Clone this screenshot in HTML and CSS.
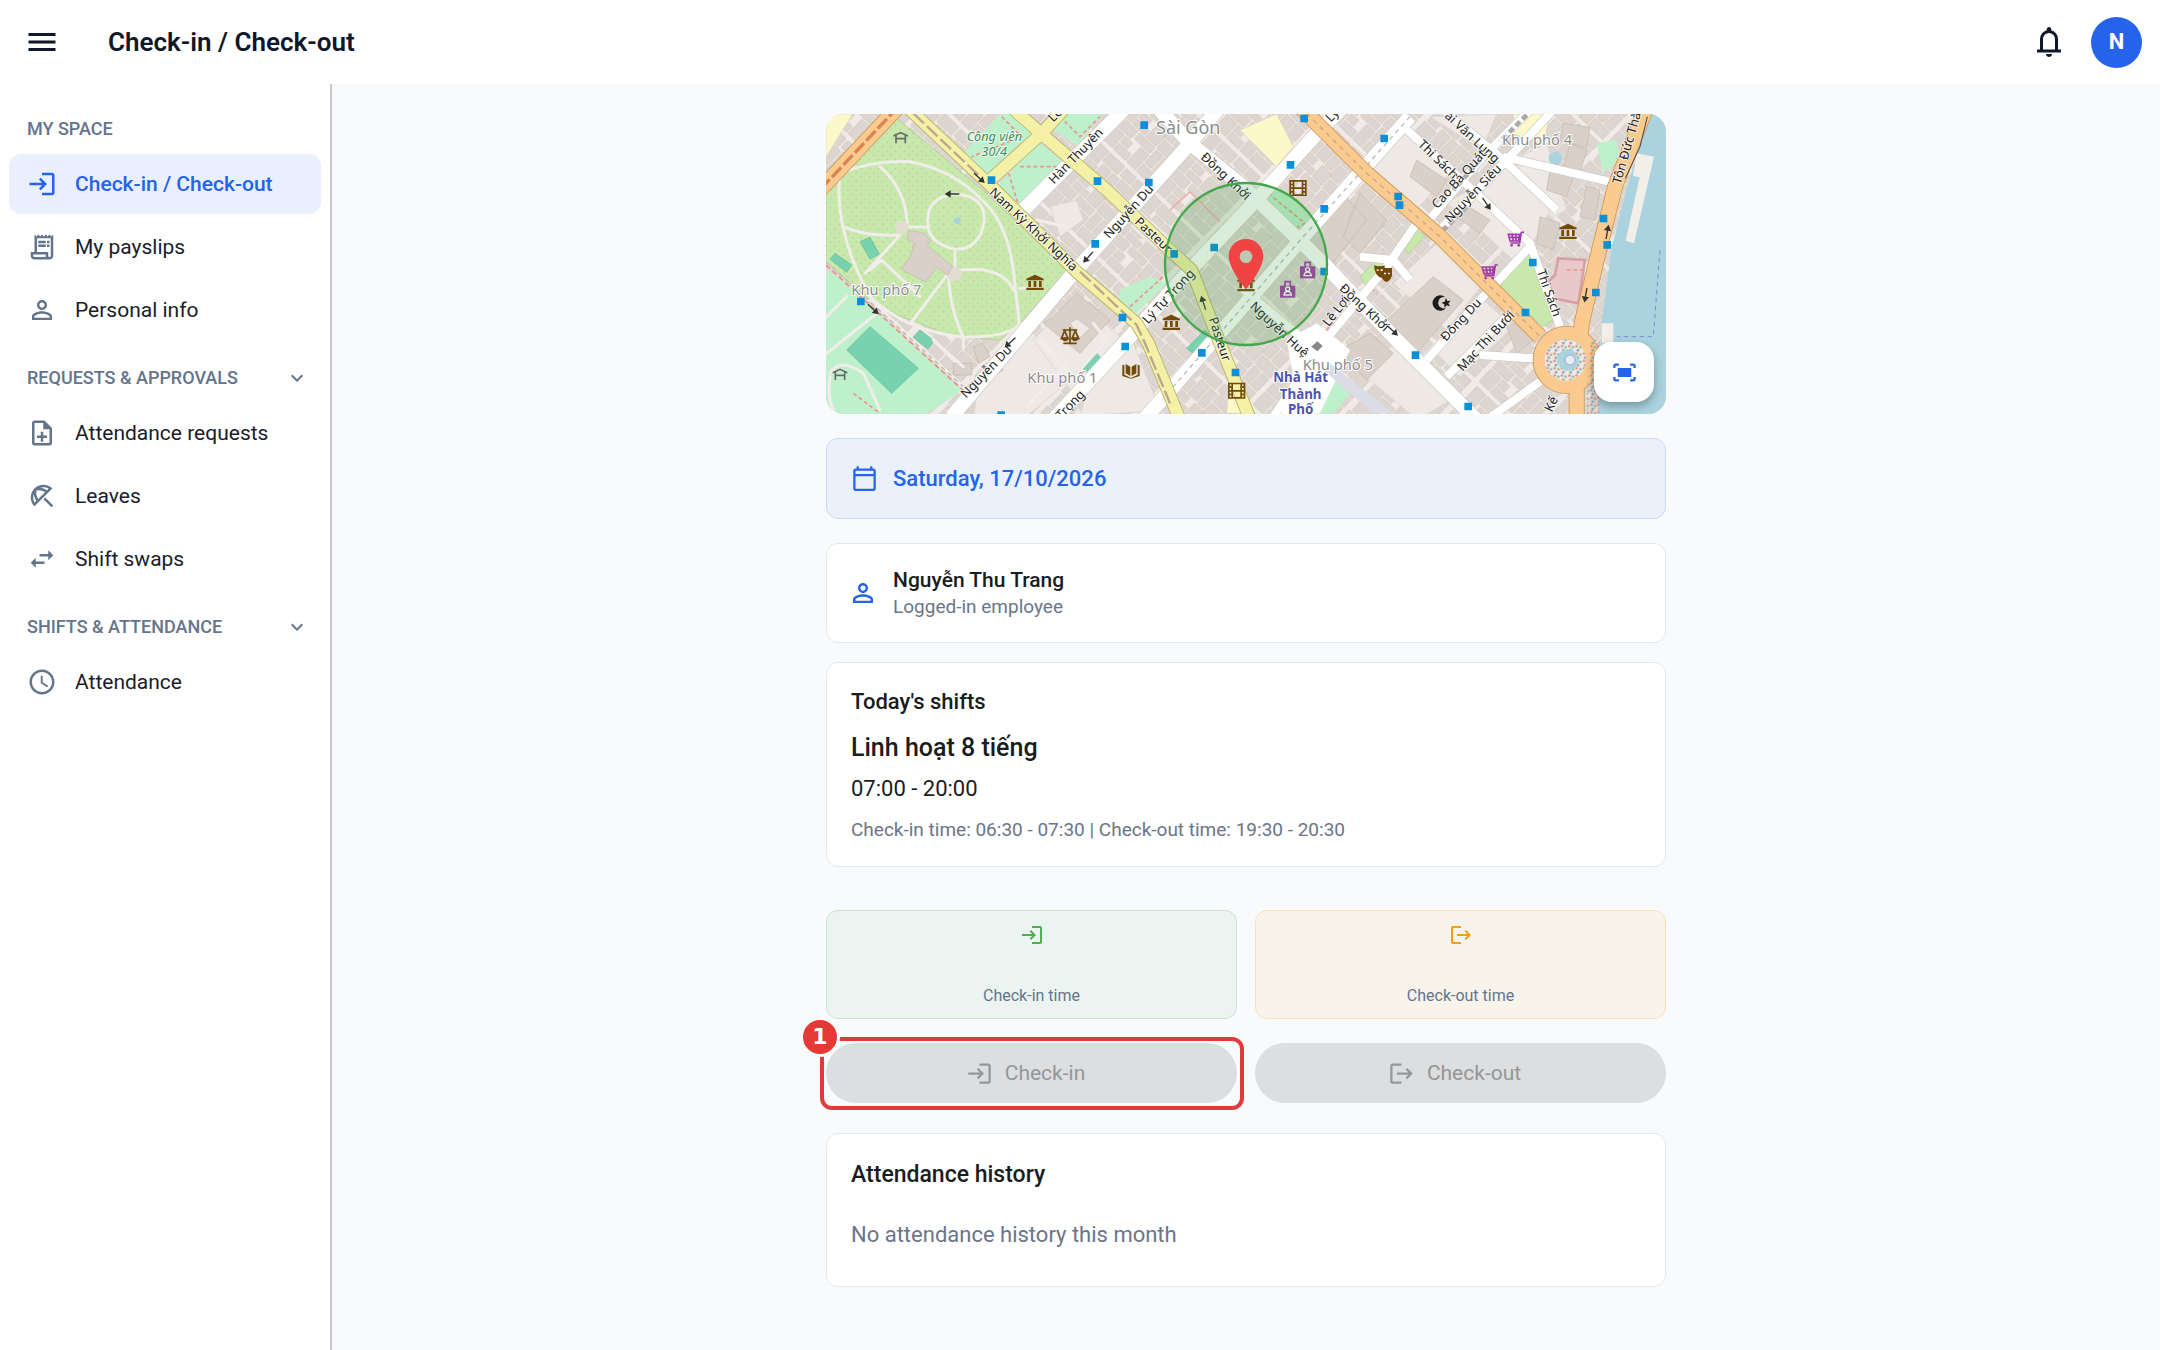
FILE: index.html
```html
<!DOCTYPE html>
<html lang="en">
<head>
<meta charset="utf-8">
<meta name="viewport" content="width=device-width, initial-scale=1">
<title>Check-in / Check-out</title>
<link rel="stylesheet" href="styles.css">
</head>
<body>
<svg class="defs" aria-hidden="true">
  <symbol id="i-login" viewBox="0 0 24 24"><path d="M11 7 9.6 8.4l2.6 2.6H2v2h10.2l-2.6 2.6L11 17l5-5-5-5zm9 12h-8v2h8c1.1 0 2-.9 2-2V5c0-1.1-.9-2-2-2h-8v2h8v14z"/></symbol>
  <symbol id="i-logout" viewBox="0 0 24 24"><path d="M17 7l-1.41 1.41L18.17 11H8v2h10.17l-2.58 2.58L17 17l5-5zM4 5h8V3H4c-1.1 0-2 .9-2 2v14c0 1.1.9 2 2 2h8v-2H4V5z"/></symbol>
  <symbol id="i-person" viewBox="0 0 24 24"><path d="M12 5.9c1.16 0 2.1.94 2.1 2.1s-.94 2.1-2.1 2.1S9.9 9.16 9.9 8s.94-2.1 2.1-2.1m0 9c2.97 0 6.1 1.46 6.1 2.1v1.1H5.9V17c0-.64 3.13-2.1 6.1-2.1M12 4C9.79 4 8 5.79 8 8s1.79 4 4 4 4-1.79 4-4-1.79-4-4-4zm0 9c-2.67 0-8 1.34-8 4v3h16v-3c0-2.66-5.33-4-8-4z"/></symbol>
  <symbol id="i-chevron" viewBox="0 0 24 24"><path d="M16.59 8.59 12 13.17 7.41 8.59 6 10l6 6 6-6z"/></symbol>
</svg>

<header class="topbar">
  <button class="icon-btn" type="button" aria-label="Menu">
    <svg class="icon-lg" viewBox="0 0 24 24"><path d="M3 18h18v-2H3v2zm0-5h18v-2H3v2zm0-7v2h18V6H3z"/></svg>
  </button>
  <h1 class="topbar-title">Check-in / Check-out</h1>
  <button class="icon-btn" type="button" aria-label="Notifications">
    <svg class="icon-lg" viewBox="0 -960 960 960"><path d="M160-200v-80h80v-280q0-83 50-147.5T420-792v-28q0-25 17.5-42.5T480-880t42.5 17.5T540-820v28q80 20 130 84.5T720-560v280h80v80H160Zm320 120q-33 0-56.500-23.500T400-160h160q0 33-23.500 56.500T480-80ZM320-280h320v-280q0-66-47-113t-113-47q-66 0-113 47t-47 113v280Z"/></svg>
  </button>
  <button class="avatar" type="button">N</button>
</header>

<div class="layout">
  <nav class="sidebar">
    <h2 class="nav-heading">MY SPACE</h2>
    <ul class="nav-list">
      <li><a class="nav-item active" href="#checkin" aria-current="page"><svg class="icon-md"><use href="#i-login"/></svg>Check-in / Check-out</a></li>
      <li><a class="nav-item" href="#payslips"><svg class="icon-md" viewBox="0 0 24 24"><path d="M19.500 3.500 18 2l-1.500 1.500L15 2l-1.500 1.500L12 2l-1.500 1.500L9 2 7.500 3.500 6 2v14H3v3c0 1.660 1.340 3 3 3h12c1.660 0 3-1.340 3-3V2l-1.500 1.500zM15 20H6c-.55 0-1-.45-1-1v-1h10v2zm4-1c0 .55-.45 1-1 1s-1-.45-1-1v-3H8V5h11v14z"/><path d="M9 7h6v2H9zM16 7h2v2h-2zM9 10h6v2H9zM16 10h2v2h-2z"/></svg>My payslips</a></li>
      <li><a class="nav-item" href="#personal"><svg class="icon-md"><use href="#i-person"/></svg>Personal info</a></li>
    </ul>
    <button class="nav-heading" type="button" aria-expanded="true">REQUESTS &amp; APPROVALS<svg class="icon-xs"><use href="#i-chevron"/></svg></button>
    <ul class="nav-list">
      <li><a class="nav-item" href="#requests"><svg class="icon-md" viewBox="0 0 24 24"><path d="M13 11h-2v3H8v2h3v3h2v-3h3v-2h-3v-3zm1-9H6c-1.100 0-2 .9-2 2v16c0 1.100.89 2 1.990 2H18c1.100 0 2-.9 2-2V8l-6-6zm4 18H6V4h7v5h5v11z"/></svg>Attendance requests</a></li>
      <li><a class="nav-item" href="#leaves"><svg class="icon-md" viewBox="0 0 24 24"><path d="M21 19.570l-1.427 1.428-6.442-6.442 1.430-1.428zM13.120 3c-2.580 0-5.160.98-7.140 2.950l-.01.01c-3.950 3.950-3.950 10.360 0 14.310l14.300-14.310C18.300 3.990 15.710 3 13.120 3zM6.140 17.270C5.400 16.030 5 14.610 5 13.120c0-.93.16-1.820.46-2.670.19 1.910.89 3.790 2.070 5.440l-1.390 1.380zm2.840-2.840C7.630 12.380 7.120 9.930 7.600 7.600c.58-.12 1.160-.18 1.750-.18 1.800 0 3.550.55 5.080 1.560l-5.450 5.450zm1.470-8.980c.85-.3 1.740-.46 2.670-.46 1.490 0 2.910.4 4.150 1.150l-1.390 1.390c-1.650-1.180-3.520-1.880-5.430-2.080z"/></svg>Leaves</a></li>
      <li><a class="nav-item" href="#swaps"><svg class="icon-md" viewBox="0 0 24 24"><path d="M6.990 11L3 15l3.990 4v-3H14v-2H6.990v-3zM21 9l-3.990-4v3H10v2h7.010v3L21 9z"/></svg>Shift swaps</a></li>
    </ul>
    <button class="nav-heading" type="button" aria-expanded="true">SHIFTS &amp; ATTENDANCE<svg class="icon-xs"><use href="#i-chevron"/></svg></button>
    <ul class="nav-list">
      <li><a class="nav-item" href="#attendance"><svg class="icon-md" viewBox="0 0 24 24"><path d="M11.990 2C6.470 2 2 6.480 2 12s4.470 10 9.990 10C17.520 22 22 17.520 22 12S17.520 2 11.990 2zM12 20c-4.420 0-8-3.580-8-8s3.580-8 8-8 8 3.580 8 8-3.580 8-8 8zm.5-13H11v6l5.250 3.150.75-1.230-4.500-2.670z"/></svg>Attendance</a></li>
    </ul>
  </nav>

  <main class="content">
    <section class="map" aria-label="Work location map">
      <svg class="map-canvas" viewBox="18 12 2520 900" preserveAspectRatio="xMidYMid slice">
        <defs>
          <pattern id="blocks" width="260" height="220" patternUnits="userSpaceOnUse" patternTransform="rotate(-46)">
            <path class="bld bld-soft" d="M8 8h52v40H8zM66 8h30v62H66zM102 12h48v26h-48zM156 8h40v50h-40zM202 14h50v36h-50zM8 54h24v50H8zM38 54h22v30H38zM102 44h20v50h-20zM128 44h22v34h-22zM156 64h58v34h-58zM220 56h32v60h-32zM8 110h60v34H8zM74 78h22v64H74zM102 100h46v40h-46zM154 104h60v26h-60zM8 150h30v60H8zM44 150h50v26H44zM44 182h50v28H44zM100 146h34v64h-34zM140 136h44v34h-44zM190 136h28v74h-28zM224 124h28v40h-28zM140 176h44v34h-44zM224 170h28v40h-28z"/>
          </pattern>
          <pattern id="trees" width="26" height="26" patternUnits="userSpaceOnUse"><circle class="tree" cx="6" cy="6" r="2"/><circle class="tree" cx="19" cy="19" r="2"/></pattern>
          <pattern id="dots" width="22" height="22" patternUnits="userSpaceOnUse"><circle cx="4" cy="5" r="4" fill="#e88f85"/><circle cx="15" cy="8" r="4" fill="#8fb6a0"/><circle cx="8" cy="17" r="4" fill="#8aa6b8"/></pattern>
          <g id="m-museum" class="poi"><path d="M0-24 26-12v5h-52v-5zM-20-5h8V13h-8zM-4-5h8V13h-8zM12-5h8V13h-8zM-26 15h52v7h-52z"/></g>
          <g id="m-film"><path class="poi" fill-rule="evenodd" d="M-26-24h52v48h-52zM-21-19v6h5v-6zM-21-8v6h5v-6zM-21 3v6h5v-6zM-21 14v6h5v-6zM16-19v6h5v-6zM16-8v6h5v-6zM16 3v6h5v-6zM16 14v6h5v-6zM-11-19v17h22v-17zM-11 3v16h22v-16z"/></g>
          <g id="m-cart"><path class="shop-line" d="M24-20h-8l-5 32h-28M15-14h-38l5 20h30M-12-13l4 18M0-13v18M10-13l-2 18M-22-5h35"/><circle class="shop" cx="-13" cy="19" r="4"/><circle class="shop" cx="8" cy="19" r="4"/></g>
          <g id="m-bag"><path class="shop-line" d="M-8-12v-13h16v13"/><path class="shop" d="M-23-13h46v36h-46z"/><circle cx="0" cy="-3" r="6" fill="none" stroke="#fff" stroke-width="4"/><path d="M-11 15c2-14 20-14 22 0z" fill="none" stroke="#fff" stroke-width="4"/></g>
          <path id="m-arrow" d="M-22-2H4v-9L22 0 4 11V2h-26z" fill="#333"/>
          <g id="m-shelter" fill="none" stroke="#6b6b6b" stroke-width="5"><path d="M-22-4 0-14 22-4M-14-6v24M14-6v24M-16 4h32"/></g>
        </defs>

        <rect x="18" y="12" width="2520" height="900" fill="#f0ebe6"/>
        <rect x="18" y="12" width="2520" height="900" fill="url(#blocks)"/>
        <g class="open">
          <path d="M1770 50 1900 180 1760 330 1620 200zM2060 170 2190 300 2100 470 1960 340 1880 280zM1850 400 1990 520 1880 660 1720 520zM1980 560 2080 650 1920 800 1840 720zM1640 740 1740 700 1910 860 1790 930 1640 800zM640 690 760 560 900 680 760 850zM480 800 640 670 760 800 620 920 460 920zM820 780 940 700 1020 900 780 920zM1830 20 2030 12 1990 110 2050 160zM2080 150 2180 100 2240 300 2200 320zM960 300 1050 380 1010 420 930 350zM690 290 770 270 790 330 720 380z"/>
          <path class="pale" d="M18 12h80l-80 130zM1260 60 1370 12 1420 110 1370 170zM18 610l50 20-50 120zM2080 12h110l-20 90-90-30zM1230 780l50 130h-60z"/>
        </g>
        <g class="bld">
          <path d="M700 620l70-70 100 80-90 100-110-90zm50 20 20-15 40 30-30 30z" fill-rule="evenodd"/>
          <path d="M1690 640 1840 500 1930 570 1780 740zM1790 150l90 60-30 50-80-60zM1930 280l80 50-30 40-70-50zM2160 320l60 20-20 80-50-20zM2190 180l70 20-20 60-60-20zM2250 100l50 20-20 70-50-20zM2300 230l40 10-15 90-45-10zM1560 720l90-50 70 60-80 80zM2060 650l60-20 20 60-50 40zM2230 40l80 12-10 60-80-20zM400 760h55v35h-55zM460 710l30-10 20 40-35 20zM500 760l30-20 20 40-30 20z"/>
          <path d="M1430 390 1560 240 1640 330 1530 470zM1620 250 1700 330 1620 430 1570 380z"/>
        </g>
        <path class="pink" d="M2215 445l80 5-20 130-75-15-15-50 20-20z"/>

        <path class="water" d="M2490 12h60v912h-215l10-290 30-220 45-180z"/>
        <path class="pier" d="M2450 130l52 10-60 260-25-8 42-190-20-4zM2345 640h35v60h-35z"/>
        <path d="M2520 420l-20 260h-110" fill="none" stroke="#7a8fd0" stroke-width="3" stroke-dasharray="14 10"/>

        <path class="park" d="M225 20 500 250 740 480 600 640 540 690 400 680 170 590 18 455V240z"/>
        <path d="M225 20 500 250 740 480 600 640 540 690 400 680 170 590 18 455V240z" fill="url(#trees)"/>
        <path class="park" d="M2030 525 2130 420 2145 480 2200 630 2170 650zM1740 400l50-45 25 25-50 50zM1620 500l50-50 30 10-60 70z"/>
        <path class="mint" d="M540 12h50l55 55-145 125-70-62zM655 95l85 70-140 132-65-72zM710 12h140l-80 95-80-57zM18 480l52 30 360 330-110 72H18zM900 540l90-40 50 20-90 90-50-30zM1335 250l60-10 80 90-20 40-60-30zM1530 800l60 50-50 62h-80zM2330 100l60-10 10 60-50 40z"/>
        <path class="pitch" d="M150 650 295 775 215 850 80 720zM120 395l30-13 28 50-28 15zM45 430l50 35-15 22-50-40zM300 660l42 32-18 25-44-35zM785 770l45-40 18 20-45 38zM1100 715l55-55 15 15-45 60z"/>
        <path class="pink-line" d="M545 20l60 60-150 60M560 170l40 130M600 170h110l-60 110M720 20l60 60 60-60M100 850l80 60M930 590l100-90M1345 250l110 90-60 30-60-90zM1340 590l120 90M1520 660l80-80M1640 520l30 30M2240 480h50"/>
        <path d="M1050 300l60-55 90 90" fill="none" stroke="#eda9a9" stroke-width="4"/>
        <circle class="water" cx="2206" cy="145" r="20"/>
        <circle class="water" cx="412" cy="332" r="10"/>

        <g class="path">
          <path d="M60 190Q160 150 270 155 400 180 480 265 560 330 580 480L598 640Q580 680 430 682 250 660 150 560 40 360 60 190zM180 170Q260 240 262 350M75 352Q140 380 240 375M262 350 325 352M325 352Q310 260 410 252 495 260 493 330 480 420 405 418 330 400 325 352M405 418V490M135 490 240 375M150 480 185 450 300 560M385 490 275 635M385 490Q390 600 430 680M405 480 480 478Q560 490 580 540M598 535h60M430 682v30M20 730 170 610M20 620 80 560M150 570 430 830M340 690 430 770M30 790Q60 740 130 790L180 900M30 800Q20 860 40 900M620 890 740 760M660 690 800 850M650 330 740 350M1390 370 1480 440M820 640l40 50-80 90"/>
        </g>
        <circle cx="245" cy="352" r="20" fill="#e3dcd3"/>
        <circle cx="404" cy="492" r="22" fill="#e3dcd3"/>
        <path class="bld" d="M265 362 310 368 332 392 322 408 398 468 384 496 350 472 318 516 244 478 270 440 284 400 262 388z"/>

        <g class="case">
          <path d="M395 920 760 490 1110 100 1200-10M600 310 910 0M690 940 930 680 1100 490 1290 290 1500 60 1570-10M1020 0 1110 100 1270 230 1510 460 1730 690 1970 930M1770 20 1450 380 1260 600 1060 830 970 930"/>
          <path d="M1740 40 1980 260 2130 400 2220 650M1870 0 2050 150 2210 300M1810 350 1980 150 2130 0M1850 370 2060 150 2200 0M1820 750 1980 570 2130 410M1880 800 2080 600M1260 530 1490 720M1360 920 1500 710 1700 470 1790 340M1980 735l160 10M2050 140l340 80M2000 930l180-130M1620 440l100 10 50 60"/>
        </g>
        <g class="road">
          <path d="M395 920 760 490 1110 100 1200-10M600 310 910 0M690 940 930 680 1100 490 1290 290 1500 60 1570-10M1020 0 1110 100 1270 230 1510 460 1730 690 1970 930M1770 20 1450 380 1260 600 1060 830 970 930"/>
          <path class="narrow" d="M1740 40 1980 260 2130 400 2220 650M1870 0 2050 150 2210 300M1810 350 1980 150 2130 0M1850 370 2060 150 2200 0M1820 750 1980 570 2130 410M1880 800 2080 600M1260 530 1490 720M1360 920 1500 710 1700 470 1790 340M1980 735l160 10M2050 140l340 80M2000 930l180-130M1620 440l100 10 50 60"/>
        </g>
        <path d="M1400 690l90-50 100 80-90 190-120 10 40-120z" fill="#fff"/>
        <path d="M1530 760l190 150h-60l-150-130z" fill="#dcdce6"/>
        <path d="M1474 710l18-16 16 14-16 16z" fill="#888"/>
        <g class="dash"><path d="M1770 20 1450 380 1260 600 1060 830M18 455 430 830"/></g>
        <path d="M2120 15l-80 80M1980 150l-80 90M1940 290l-90 90" fill="none" stroke="#aaa" stroke-width="14" stroke-dasharray="18 10"/>
        <path d="M18 465 430 842" fill="none" stroke="#f28c84" stroke-width="5" stroke-dasharray="16 10"/>

        <g class="y-case"><path d="M260-10 520 235 770 485 950 640 985 700 1080 930M505 215 665 70 730 0M560-20 680 85 860 240 1060 430 1115 480 1200 700 1295 940"/></g>
        <g class="y-road"><path d="M260-10 520 235 770 485 950 640 985 700 1080 930M505 215 665 70 730 0M560-20 680 85 860 240 1060 430 1115 480 1200 700 1295 940"/></g>
        <path d="M280 10 480 200M780 485 950 645 975 700 1050 880" fill="none" stroke="#b9a88c" stroke-width="7" stroke-dasharray="44 12"/>

        <g class="o-case"><path d="M235-10-10 250M1440-10 1640 190 1860 380 2160 680M2480-10 2385 230 2330 450 2285 640 2270 800 2270 930"/><circle cx="2240" cy="750" r="78"/></g>
        <g class="o-road"><path d="M235-10-10 250M1440-10 1640 190 1860 380 2160 680M2480-10 2385 230 2330 450 2285 640 2270 800 2270 930"/><circle cx="2240" cy="750" r="78"/></g>
        <path d="M235-10-10 250" fill="none" stroke="#d98550" stroke-width="10" stroke-dasharray="40 10"/>
        <path d="M1440-10 1640 190 1860 380 2160 680" fill="none" stroke="#cda58a" stroke-width="4" stroke-dasharray="14 14"/>
        <circle cx="2236" cy="750" r="62" fill="#eee9e6"/>
        <circle cx="2236" cy="750" r="62" fill="url(#dots)"/>
        <circle cx="2244" cy="750" r="32" fill="#aad3df"/>
        <circle cx="2250" cy="750" r="15" fill="#e8edf5" stroke="#9aa9cf" stroke-width="3"/>
        <path d="M2308 690h30v222h-38z" fill="url(#dots)"/>
        <path d="M2482 20 2460 110 2416 205" fill="none" stroke="#444" stroke-width="3"/>

        <g class="area">
          <text x="94" y="556">Khu phố 7</text>
          <text x="622" y="820">Khu phố 1</text>
          <text x="2046" y="106">Khu phố 4</text>
          <text x="1448" y="780">Khu phố 5</text>
          <text class="area-lg" x="1008" y="72">Sài Gòn</text>
        </g>
        <g class="park-name"><text x="523" y="94">Công viên</text><text x="523" y="138">30/4</text></g>
        <g class="hall"><text x="1442" y="816">Nhà Hát</text><text x="1442" y="866">Thành</text><text x="1442" y="912">Phố</text></g>
        <g class="street">
          <text transform="translate(506 250) rotate(43)">Nam Kỳ Khởi Nghĩa</text>
          <text transform="translate(702 224) rotate(-46)">Hàn Thuyên</text>
          <text transform="translate(868 388) rotate(-48)">Nguyễn Du</text>
          <text transform="translate(438 866) rotate(-46)">Nguyễn Du</text>
          <text transform="translate(942 338) rotate(43)">Pasteur</text>
          <text transform="translate(1166 626) rotate(72)">Pasteur</text>
          <text transform="translate(984 644) rotate(-47)">Lý Tự Trọng</text>
          <text transform="translate(724 930) rotate(-46)">Trọng</text>
          <text transform="translate(1140 144) rotate(43)">Đồng Khởi</text>
          <text transform="translate(700 38) rotate(-46)">Lê</text>
          <text transform="translate(1532 38) rotate(-46)">Lý</text>
          <text transform="translate(1288 592) rotate(43)">Nguyễn Huệ</text>
          <text transform="translate(1556 538) rotate(43)">Đồng Khởi</text>
          <text transform="translate(1526 652) rotate(-52)">Lê Lợi</text>
          <text transform="translate(1792 106) rotate(44)">Thi Sách</text>
          <text transform="translate(1872 20) rotate(43)">ái Văn Lung</text>
          <text transform="translate(1852 298) rotate(-48)">Cao Bá Quát</text>
          <text transform="translate(1890 340) rotate(-46)">Nguyễn Siêu</text>
          <text transform="translate(1878 696) rotate(-47)">Đông Du</text>
          <text transform="translate(1928 786) rotate(-47)">Mạc Thị Bưởi</text>
          <text transform="translate(2150 484) rotate(70)">Thi Sách</text>
          <text transform="translate(2402 224) rotate(-74)">Tôn Đức Thắ</text>
          <text transform="translate(2196 908) rotate(-65)">Kế</text>
        </g>

        <g class="stop">
          <path d="M503 199h23v23h-23zM821 202h23v23h-23zM975 206h23v23h-23zM961 34h23v23h-23zM814 390h23v23h-23zM1051 420h23v23h-23zM1171 401h23v23h-23zM111 563h23v23h-23zM896 611h23v23h-23zM904 698h23v23h-23zM1134 717h23v23h-23zM1235 776h23v23h-23zM532 904h23v23h-23zM1441 14h23v23h-23zM1681 74h23v23h-23zM1400 153h23v23h-23zM1501 285h23v23h-23zM1723 248h23v23h-23zM1727 274h23v23h-23zM1501 473h23v23h-23zM2127 446h23v23h-23zM2339 314h23v23h-23zM2350 393h23v23h-23zM2316 536h23v23h-23zM2105 596h23v23h-23zM1775 724h23v23h-23zM1933 878h23v23h-23z"/>
        </g>
        <use href="#m-arrow" transform="translate(478 204) rotate(43)"/>
        <use href="#m-arrow" transform="translate(396 252) rotate(180)"/>
        <use href="#m-arrow" transform="translate(804 442) rotate(132)"/>
        <use href="#m-arrow" transform="translate(570 698) rotate(138)"/>
        <use href="#m-arrow" transform="translate(160 598) rotate(43)"/>
        <use href="#m-arrow" transform="translate(1150 578) rotate(-108)"/>
        <use href="#m-arrow" transform="translate(1718 662) rotate(43)"/>
        <use href="#m-arrow" transform="translate(2000 282) rotate(56)"/>
        <use href="#m-arrow" transform="translate(2362 366) rotate(-80)"/>
        <use href="#m-arrow" transform="translate(2297 556) rotate(100)"/>
        <use href="#m-shelter" x="242" y="82"/>
        <use href="#m-shelter" x="60" y="792"/>
        <use href="#m-museum" x="645" y="518"/>
        <use href="#m-museum" x="1054" y="638"/>
        <use href="#m-museum" x="2244" y="365"/>
        <use href="#m-museum" x="1278" y="522"/>
        <use href="#m-film" x="1250" y="842"/>
        <use href="#m-film" x="1434" y="234"/>
        <use href="#m-cart" x="2088" y="387"/>
        <use href="#m-cart" x="2010" y="485"/>
        <use href="#m-bag" x="1463" y="482"/>
        <use href="#m-bag" x="1403" y="540"/>
        <path fill="none" stroke="#734a08" stroke-width="5" d="M750 652v46M730 700h40M728 660h44M734 662l-10 24h20zM766 662l-10 24h20z"/>
        <path class="poi" d="M724 682h22q-2 12-11 12t-11-12zM754 682h22q-2 12-11 12t-11-12zM907 766l6-2v30l20 10 20-10v-30l6 2v32l-26 8-26-8zM917 762l14 8v28l-14-8zM949 762l-14 8v28l14-8z"/>
        <path class="poi" d="M1662 466q16 6 32 0v8h22v22q-4 16-16 20-10-2-14-12-22-4-24-38zM1670 478v5h6v-5zM1682 478v5h6v-5zM1692 488v5h6v-5zM1704 488v5h6v-5z" fill-rule="evenodd"/>
        <path d="M1876 562a23 23 0 1 0 2 32 17 17 0 1 1-2-32z"/>
        <path d="M1878 564l4 9 10-1-7 8 5 9-10-3-7 7v-10l-9-5 10-3z"/>

        <circle cx="1278" cy="462" r="243" fill="#43a047" fill-opacity=".2" stroke="#43a84b" stroke-width="7"/>
        <path fill="#f04343" fill-rule="evenodd" d="M1278 387c-29 0-52 23-52 52 0 38 52 99 52 99s52-61 52-99c0-29-23-52-52-52zm0 34a19 19 0 1 1 0 38 19 19 0 0 1 0-38z"/>
      </svg>
      <button class="map-fit" type="button" aria-label="Fit map">
        <svg class="icon-sm" viewBox="0 0 24 24"><path d="M17 4h3c1.100 0 2 .9 2 2v2h-2V6h-3V4zM4 8V6h3V4H4c-1.100 0-2 .9-2 2v2h2zm16 8v2h-3v2h3c1.100 0 2-.9 2-2v-2h-2zM7 18H4v-2H2v2c0 1.100.9 2 2 2h3v-2zM18 8H6v8h12V8z"/></svg>
      </button>
    </section>

    <section class="card date-card">
      <svg class="icon-sm" viewBox="0 0 24 24"><path d="M20 3h-1V1h-2v2H7V1H5v2H4c-1.100 0-2 .9-2 2v16c0 1.100.9 2 2 2h16c1.100 0 2-.9 2-2V5c0-1.100-.9-2-2-2zm0 18H4V10h16v11zm0-13H4V5h16v3z"/></svg>
      <span>Saturday, 17/10/2026</span>
    </section>

    <section class="card employee-card">
      <svg class="icon-md"><use href="#i-person"/></svg>
      <div>
        <p class="employee-name">Nguyễn Thu Trang</p>
        <p class="muted">Logged-in employee</p>
      </div>
    </section>

    <section class="card shifts-card">
      <h2 class="shifts-title">Today's shifts</h2>
      <h3 class="shift-name">Linh hoạt 8 tiếng</h3>
      <p class="shift-hours">07:00 - 20:00</p>
      <p class="muted">Check-in time: 06:30 - 07:30 | Check-out time: 19:30 - 20:30</p>
    </section>

    <section class="pair tiles">
      <div class="tile tile-in"><svg class="icon-xs"><use href="#i-login"/></svg><span>Check-in time</span></div>
      <div class="tile tile-out"><svg class="icon-xs"><use href="#i-logout"/></svg><span>Check-out time</span></div>
    </section>

    <section class="pair actions">
      <div class="step">
        <button class="pill" type="button" disabled><svg class="icon-sm"><use href="#i-login"/></svg>Check-in</button>
        <span class="step-frame"></span>
        <span class="step-badge">1</span>
      </div>
      <button class="pill" type="button" disabled><svg class="icon-sm"><use href="#i-logout"/></svg>Check-out</button>
    </section>

    <section class="card history-card">
      <h2 class="history-title">Attendance history</h2>
      <p class="history-empty">No attendance history this month</p>
    </section>
  </main>
</div>
</body>
</html>
```
FILE: styles.css
```css
* { box-sizing: border-box; }

body {
  margin: 0;
  min-height: 100vh;
  display: flex;
  flex-direction: column;
  background: #f9fafc;
  color: #1a1c1e;
  font-family: Roboto, "Noto Sans", sans-serif;
  font-size: 22px;
  line-height: 32px;
}

h1, h2, h3, p, ul { margin: 0; padding: 0; }
ul { list-style: none; }
button { border: 0; padding: 0; margin: 0; background: none; color: inherit; font: inherit; }
svg { fill: currentColor; flex: none; }

.defs { position: absolute; width: 0; height: 0; }
.icon-xs { width: 24px; height: 24px; }
.icon-sm { width: 27px; height: 27px; }
.icon-md { width: 30px; height: 30px; }
.icon-lg { width: 36px; height: 36px; display: block; }

/* Top bar */
.topbar {
  display: flex;
  align-items: center;
  gap: 24px;
  height: 84px;
  padding: 0 18px 0 24px;
  background: #fff;
  color: #0f172a;
}
.topbar-title {
  flex: 1;
  padding-left: 24px;
  font-size: 26px;
  font-weight: 600;
  line-height: 36px;
}
.avatar {
  width: 51px;
  height: 51px;
  border-radius: 50%;
  background: #2563eb;
  color: #fff;
  font-size: 22px;
  font-weight: 700;
}

/* Sidebar */
.layout { flex: 1; display: flex; }
.sidebar {
  flex: none;
  width: 332px;
  padding: 20px 9px;
  border-right: 2px solid #c6c8cb;
  background: #fff;
}
.nav-heading {
  display: flex;
  align-items: center;
  justify-content: space-between;
  width: 100%;
  height: 50px;
  padding: 0 12px 0 18px;
  color: #64748b;
  font-size: 18px;
  font-weight: 500;
  line-height: 24px;
}
.nav-list {
  display: flex;
  flex-direction: column;
  gap: 3px;
  margin-bottom: 13px;
}
.nav-item {
  display: flex;
  align-items: center;
  gap: 18px;
  height: 60px;
  padding: 0 18px;
  border-radius: 12px;
  color: #1a1c2b;
  font-size: 21px;
  text-decoration: none;
}
.nav-item svg { color: #64748b; }
.nav-item.active { background: #e9effd; color: #2563eb; font-weight: 500; }
.nav-item.active svg { color: #2563eb; }

/* Content column */
.content {
  flex: 1;
  max-width: 840px;
  margin: 0 auto;
  padding: 30px 0 62px;
}
.card {
  padding: 24px;
  border: 1px solid #e4e8ee;
  border-radius: 12px;
  background: #fff;
}
.muted { color: #6b7588; font-size: 19px; line-height: 26px; }

.map {
  position: relative;
  height: 300px;
  overflow: hidden;
  border-radius: 18px;
}
.map-canvas { display: block; width: 100%; height: 100%; }
.map-fit {
  position: absolute;
  right: 12px;
  bottom: 12px;
  display: grid;
  place-items: center;
  width: 60px;
  height: 60px;
  border-radius: 18px;
  background: #fff;
  color: #2563eb;
  box-shadow: 0 4px 10px rgba(0, 0, 0, .3);
}

.date-card {
  display: flex;
  align-items: center;
  gap: 15px;
  margin-top: 24px;
  min-height: 81px;
  padding: 20px 24px;
  border-color: #c9dafa;
  background: #ebf1fb;
  color: #2563eb;
  font-weight: 500;
}
.employee-card {
  display: flex;
  align-items: center;
  gap: 15px;
  margin-top: 24px;
  min-height: 100px;
  padding: 21px;
}
.employee-card svg { color: #2563eb; }
.employee-name { font-size: 21px; font-weight: 500; line-height: 28px; }

.shifts-card { margin-top: 19px; padding: 23px 24px; }
.shifts-title { font-size: 22px; font-weight: 500; line-height: 32px; }
.shift-name { margin-top: 12px; font-size: 25px; font-weight: 500; line-height: 36px; }
.shift-hours { margin: 7px 0 12px; }

.pair { display: grid; grid-template-columns: 1fr 1fr; gap: 18px; }
.tiles { margin-top: 43px; }
.tile {
  display: flex;
  flex-direction: column;
  align-items: center;
  justify-content: space-between;
  height: 109px;
  padding: 12px;
  border: 1px solid;
  border-radius: 12px;
}
.tile span { color: #64748b; font-size: 16px; line-height: 20px; }
.tile-in { border-color: #c5e6cf; background: #ebf4f1; color: #4caf50; }
.tile-out { border-color: #fbe0b8; background: #f8f3eb; color: #f59e0b; }

.actions { margin-top: 24px; }
.step { position: relative; }
.pill {
  display: flex;
  align-items: center;
  justify-content: center;
  gap: 12px;
  width: 100%;
  height: 60px;
  padding-right: 12px;
  border-radius: 30px;
  background: #dddee0;
  color: #949698;
  font-size: 21px;
}
.step-frame {
  position: absolute;
  inset: -6px -7px -7px -6px;
  border: 4px solid #e03a3a;
  border-radius: 12px;
}
.step-badge {
  position: absolute;
  left: -26px;
  top: -26px;
  width: 40px;
  height: 40px;
  border: 3px solid #f9fafc;
  border-radius: 50%;
  background: #e53935;
  color: #fff;
  font-family: "DejaVu Sans", sans-serif;
  font-size: 22px;
  font-weight: 700;
  line-height: 34px;
  text-align: center;
}

.history-card { margin-top: 30px; padding: 26px 24px 36px; }
.history-title { font-size: 23px; font-weight: 500; line-height: 30px; }
.history-empty { margin-top: 30px; color: #6b7588; line-height: 30px; }

/* Map drawing */
.bld { fill: #d9d0c9; stroke: #c4b6ab; stroke-width: 2; }
.bld-soft { fill: #ddd5cf; stroke: #cfc4bb; }
.open { fill: #eee9e4; stroke: #d8d2cc; stroke-width: 2; }
.pale { fill: #fdf8c8; }
.pink { fill: #e8c8c8; stroke: #d9a0a4; stroke-width: 8; }
.pier { fill: #f2efe9; }
.tree { fill: #93c48a; }
.water { fill: #aad3df; }
.park { fill: #c8e8ac; stroke: #a9c992; stroke-width: 2; }
.mint { fill: #bff0cc; }
.pitch { fill: #78d2b0; stroke: #5fbb98; stroke-width: 2; }
.pink-line { fill: none; stroke: #f0938c; stroke-width: 5; stroke-dasharray: 12 8; }
.path { fill: none; stroke: #f1edea; stroke-width: 9; stroke-linecap: round; stroke-linejoin: round; }
.case { fill: none; stroke: #cfcac6; stroke-width: 46; stroke-linejoin: round; }
.case path + path { stroke-width: 28; }
.road { fill: none; stroke: #fff; stroke-width: 42; stroke-linejoin: round; }
.narrow { stroke-width: 24; }
.dash { fill: none; stroke: #bbb; stroke-width: 4; stroke-dasharray: 14 12; }
.y-case { fill: none; stroke: #b3b070; stroke-width: 40; stroke-linejoin: round; }
.y-road { fill: none; stroke: #f4f1a6; stroke-width: 35; stroke-linejoin: round; }
.o-case { fill: none; stroke: #c9975a; stroke-width: 48; stroke-linejoin: round; }
.o-road { fill: none; stroke: #fbca8f; stroke-width: 43; stroke-linejoin: round; }
.stop { fill: #0b8fd9; }
.poi { fill: #734a08; }
.shop { fill: #a23bad; }
.shop-line { fill: none; stroke: #a23bad; stroke-width: 5; }

.map-canvas text {
  font-family: "Noto Sans", sans-serif;
  font-size: 38px;
  paint-order: stroke;
  stroke: rgba(255, 255, 255, .7);
  stroke-width: 6px;
}
.street { fill: #222; }
.area { fill: #8c8c8c; }
.map-canvas .area text { font-size: 44px; stroke: #fff; }
.map-canvas .area .area-lg { font-size: 54px; }
.park-name { fill: #3d8f5a; font-style: italic; text-anchor: middle; }
.hall { fill: #4a55b0; font-weight: 700; text-anchor: middle; }
.map-canvas .hall text { font-size: 40px; stroke: #fff; }
```
